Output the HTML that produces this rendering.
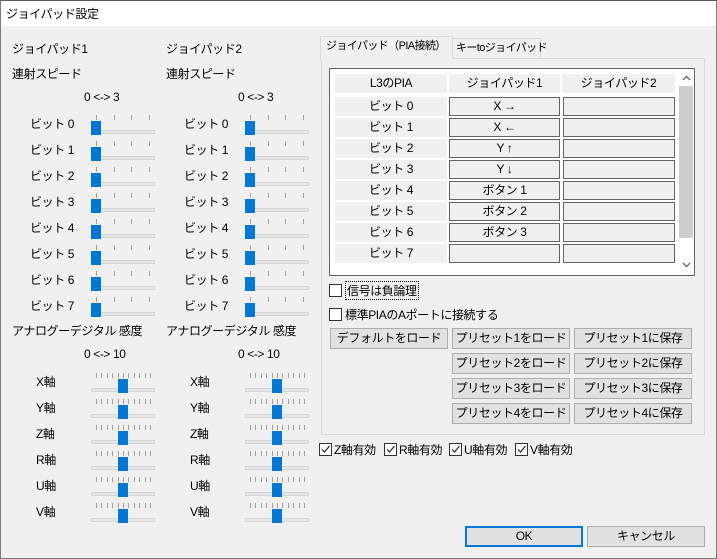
<!DOCTYPE html><html><head><meta charset="utf-8"><style>
*{box-sizing:border-box;margin:0;padding:0}
body{width:717px;height:559px;overflow:hidden;background:#f0f0f0;font-family:"Liberation Sans","Noto Sans CJK JP",sans-serif;font-size:12px;color:#000;position:relative;letter-spacing:-0.4px}
.a{position:absolute;white-space:nowrap}
.win{position:absolute;left:0;top:0;width:717px;height:559px;border:1px solid #7a7a7a;border-top:1px solid #5a5a5a}
.title{position:absolute;left:1px;top:1px;width:715px;height:25px;background:#fff}
.thumb{position:absolute;width:10px;height:14px;background:#0078d7}
.track{position:absolute;height:4px;background:#e7e7e7;border:1px solid #d6d6d6}
.tick{position:absolute;width:1px;height:5px;background:#a0a0a0}
.btn{position:absolute;height:21px;background:#e1e1e1;border:1px solid #adadad;text-align:center;line-height:19px;font-size:12px}
.cell{position:absolute;height:19px;text-align:center;line-height:19px;font-size:12px}
.lc{background:#f0f0f0}
.bc{border:1px solid #646464;background:#f0f0f0;line-height:17px}
.cb{position:absolute;width:13px;height:13px;border:1px solid #333;background:#fff}
</style></head><body>
<div class="win"></div>
<div class="title"></div>
<div class="a" style="left:6px;top:5px;font-size:12px">ジョイパッド設定</div>

<div class="a" style="left:12px;top:40px">ジョイパッド1</div>
<div class="a" style="left:166px;top:40px">ジョイパッド2</div>
<div class="a" style="left:12px;top:65px">連射スピード</div>
<div class="a" style="left:166px;top:65px">連射スピード</div>
<div class="a" style="left:84px;top:90px">0 &lt;-&gt; 3</div>
<div class="a" style="left:238px;top:90px">0 &lt;-&gt; 3</div>
<div class="a" style="left:12px;top:322px">アナログーデジタル 感度</div>
<div class="a" style="left:166px;top:322px">アナログーデジタル 感度</div>
<div class="a" style="left:84px;top:347px">0 &lt;-&gt; 10</div>
<div class="a" style="left:238px;top:347px">0 &lt;-&gt; 10</div>

<div id="sl"></div>

<div class="a" style="left:452px;top:38px;width:89px;height:21px;border:1px solid #d9d9d9;border-bottom:none;background:#f0f0f0;padding-left:3px;line-height:18px;font-size:11px;letter-spacing:-0.6px">キーtoジョイパッド</div>
<div class="a" style="left:321px;top:58px;width:384px;height:377px;border:1px solid #dadada;background:#f0f0f0"></div>
<div class="a" style="left:320px;top:36px;width:133px;height:23px;border:1px solid #dadada;border-bottom:none;background:#f0f0f0;padding-left:5px;line-height:18px;font-size:11px;letter-spacing:-0.6px">ジョイパッド（PIA接続）</div>
<div class="a" style="left:329px;top:68px;width:366px;height:208px;border:1px solid #646464;background:#fff"></div>
<div class="a" style="left:679px;top:86px;width:14px;height:152px;background:#cdcdcd"></div>
<svg class="a" style="left:682px;top:75px" width="9" height="6"><path d="M1 5L4.5 1.5L8 5" stroke="#555" fill="none" stroke-width="1.2"/></svg>
<svg class="a" style="left:682px;top:262px" width="9" height="6"><path d="M1 1L4.5 4.5L8 1" stroke="#555" fill="none" stroke-width="1.2"/></svg>
<div id="grid"></div>

<div class="cb" style="left:329px;top:284px"></div>
<div class="a" style="left:345px;top:281px;border:1px dotted #000;padding:0 1px">信号は負論理</div>
<div class="cb" style="left:329px;top:308px"></div>
<div class="a" style="left:345px;top:306px">標準PIAのAポートに接続する</div>

<div class="btn" style="left:330px;top:328px;width:118px">デフォルトをロード</div>
<div id="bt"></div>

<div id="cbs"></div>

<div class="btn" style="left:465px;top:526px;width:118px;border:2px solid #0078d7;line-height:17px">OK</div>
<div class="btn" style="left:587px;top:526px;width:118px">キャンセル</div>

<script>
var h='';
function slider(x,y,ticks,tx){
 for(var i=0;i<ticks.length;i++)h+='<div class="tick" style="left:'+ticks[i]+'px;top:'+(y-6)+'px"></div>';
 h+='<div class="track" style="left:'+x+'px;top:'+(y+9)+'px;width:64px"></div>';
 h+='<div class="thumb" style="left:'+tx+'px;top:'+y+'px"></div>';
}
for(var c=0;c<2;c++){var o=c*154;
 for(var i=0;i<8;i++){var y=121+26*i;
  h+='<div class="a" style="left:'+(30+o)+'px;top:'+(y-6)+'px">ビット '+i+'</div>';
  slider(91+o,y,[96+o,114+o,131+o,149+o],91+o);}
 var ax=['X','Y','Z','R','U','V'];
 for(var i=0;i<6;i++){var y=379+26*i;
  h+='<div class="a" style="left:'+(36+o)+'px;top:'+(y-6)+'px">'+ax[i]+'軸</div>';
  var t=[];for(var k=0;k<11;k++)t.push(96+o+Math.round(k*5.4));
  slider(91+o,y,t,118+o);}
}
document.getElementById('sl').innerHTML=h;
var g='';
g+='<div class="cell lc" style="left:335px;top:74px;width:112px">L3のPIA</div>';
g+='<div class="cell lc" style="left:449px;top:74px;width:111px">ジョイパッド1</div>';
g+='<div class="cell lc" style="left:562px;top:74px;width:113px">ジョイパッド2</div>';
var v=['X →','X ←','Y ↑','Y ↓','ボタン 1','ボタン 2','ボタン 3',''];
for(var i=0;i<8;i++){var y=97+21*i;
 g+='<div class="cell lc" style="left:335px;top:'+y+'px;width:112px">ビット '+i+'</div>';
 g+='<div class="cell bc" style="left:449px;top:'+y+'px;width:111px">'+v[i]+'</div>';
 g+='<div class="cell bc" style="left:563px;top:'+y+'px;width:112px"></div>';}
document.getElementById('grid').innerHTML=g;
var b='';
for(var i=0;i<4;i++){var y=328+25*i;
 b+='<div class="btn" style="left:452px;top:'+y+'px;width:118px">プリセット'+(i+1)+'をロード</div>';
 b+='<div class="btn" style="left:574px;top:'+y+'px;width:118px">プリセット'+(i+1)+'に保存</div>';}
document.getElementById('bt').innerHTML=b;
var c='',xs=[319,384,449,515],ls=['Z','R','U','V'];
for(var i=0;i<4;i++){c+='<div class="cb" style="left:'+xs[i]+'px;top:443px"><svg width="11" height="11" style="position:absolute;left:0;top:0"><path d="M2 5.5L4.5 8L9.5 2" stroke="#222" fill="none" stroke-width="1.2"/></svg></div><div class="a" style="left:'+(xs[i]+15)+'px;top:441px">'+ls[i]+'軸有効</div>';}
document.getElementById('cbs').innerHTML=c;
</script>
</body></html>
